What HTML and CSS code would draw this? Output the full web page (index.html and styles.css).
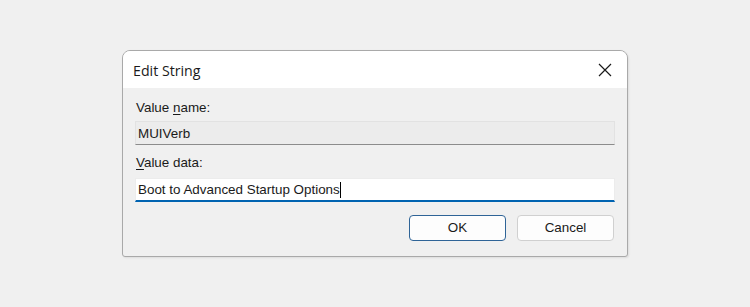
FILE: index.html
```html
<!DOCTYPE html>
<html>
<head>
<meta charset="utf-8">
<link rel="stylesheet" href="styles.css">
</head>
<body>
<div class="stage">
  <div class="dialog">
    <div class="titlebar">
      <span class="title">Edit String</span>
      <span class="close">
        <svg width="14" height="14" viewBox="0 0 14 14"><path d="M1 1 L13 13 M13 1 L1 13" stroke="#1a1a1a" stroke-width="1.2" fill="none"/></svg>
      </span>
    </div>
    <div class="content">
      <div class="label">Value <u>n</u>ame:</div>
      <div class="field readonly">MUIVerb</div>
      <div class="label second"><u>V</u>alue data:</div>
      <div class="field active"><span>Boot to Advanced Startup Options</span><span class="caret"></span></div>
      <div class="buttons">
        <div class="btn default">OK</div>
        <div class="btn">Cancel</div>
      </div>
    </div>
  </div>
</div>
</body>
</html>
```
FILE: styles.css
```css
html, body {
  margin: 0;
  padding: 0;
  background: #f0f0f0;
  width: 750px;
  height: 307px;
  overflow: hidden;
}
.stage {
  padding: 50px 0 0 122px;
}
.dialog {
  width: 504px;
  border: 1px solid #a9a9a9;
  border-radius: 8px 8px 3px 3px;
  background: #f0f0f0;
  overflow: hidden;
  box-shadow: 1px 1px 2px rgba(0,0,0,0.08);
}
.titlebar {
  height: 37px;
  background: #ffffff;
  display: flex;
  align-items: center;
  justify-content: space-between;
  padding: 0 15px 0 10px;
}
.title {
  font-family: "Open Sans", "Noto Sans", sans-serif;
  font-size: 14.2px;
  color: #1a1a1a;
  margin-top: 1px;
}
.close {
  display: flex;
  width: 14px;
  height: 14px;
  margin-top: 1px;
}
.content {
  padding: 12px 12px 15px 12px;
  font-family: "Liberation Sans", Arial, sans-serif;
  font-size: 13.4px;
  color: #1a1a1a;
}
.label {
  line-height: 16px;
  height: 16px;
  padding-left: 1px;
}
.label u {
  text-underline-offset: 2px;
}
.label.second {
  margin-top: 10px;
}
.field {
  margin-top: 5px;
  height: 23px;
  line-height: 23px;
  padding-left: 2px;
  display: flex;
  align-items: center;
  box-sizing: content-box;
}
.field.readonly {
  background: #ececec;
  border: 1px solid #e2e2e2;
  border-bottom: 1px solid #8c8c8c;
  height: 22px;
}
.field.active {
  margin-top: 7px;
  background: #ffffff;
  border: 1px solid #ececec;
  border-bottom: 2px solid #0063b1;
  height: 21px;
}
.caret {
  display: inline-block;
  width: 1px;
  height: 16px;
  background: #000;
  margin-left: 0px;
}
.buttons {
  margin-top: 13px;
  display: flex;
  justify-content: flex-end;
  gap: 11px;
  padding-right: 1px;
}
.btn {
  width: 95px;
  height: 24px;
  line-height: 24px;
  text-align: center;
  border: 1px solid #d0d0d0;
  border-radius: 4px;
  background: #fdfdfd;
  font-size: 13.4px;
}
.btn.default {
  border-color: #2f6497;
  background: #fdfdfd;
}
```
